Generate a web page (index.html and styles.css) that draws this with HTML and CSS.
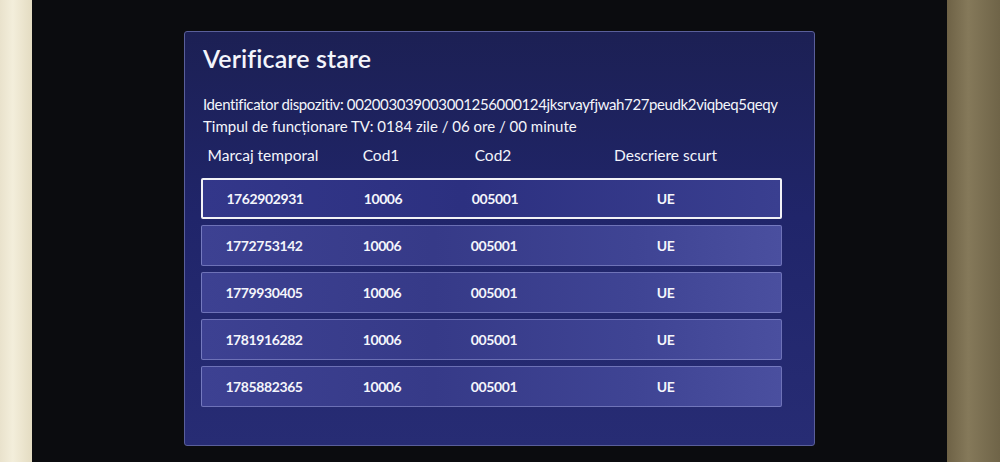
FILE: index.html
```html
<!DOCTYPE html>
<html lang="ro">
<head>
<meta charset="utf-8">
<title>Verificare stare</title>
<link rel="stylesheet" href="styles.css">
</head>
<body>
<div class="room">
  <div class="wall-left"></div>
  <div class="screen">
    <section class="panel">
      <h1 class="title">Verificare stare</h1>
      <p class="info id">Identificator dispozitiv: 002003039003001256000124jksrvayfjwah727peudk2viqbeq5qeqy</p>
      <p class="info">Timpul de funcționare TV: 0184 zile / 06 ore / 00 minute</p>
      <div class="grid head">
        <span>Marcaj temporal</span>
        <span>Cod1</span>
        <span>Cod2</span>
        <span>Descriere scurt</span>
      </div>
      <div class="rows">
        <div class="grid row selected"><span>1762902931</span><span>10006</span><span>005001</span><span>UE</span></div>
        <div class="grid row"><span>1772753142</span><span>10006</span><span>005001</span><span>UE</span></div>
        <div class="grid row"><span>1779930405</span><span>10006</span><span>005001</span><span>UE</span></div>
        <div class="grid row"><span>1781916282</span><span>10006</span><span>005001</span><span>UE</span></div>
        <div class="grid row"><span>1785882365</span><span>10006</span><span>005001</span><span>UE</span></div>
      </div>
    </section>
  </div>
  <div class="wall-right"></div>
</div>
</body>
</html>
```

FILE: styles.css
```css
* { box-sizing: border-box; }
html, body {
  margin: 0;
  padding: 0;
  width: 1000px;
  height: 462px;
  overflow: hidden;
  background: #0a0a0c;
  font-family: "Lato", "Noto Sans", sans-serif;
  color: #f4f5fb;
}
.room {
  display: flex;
  height: 462px;
}
.wall-left {
  width: 32px;
  background: linear-gradient(90deg, #e9e2cc 0%, #f3eedb 40%, #e4dcc2 100%);
}
.wall-right {
  width: 53px;
  background: linear-gradient(90deg, #6e6246 0%, #85795a 40%, #6f6448 100%);
}
.screen {
  flex: 1;
  background: #0b0c0f;
  padding: 31px 0 0 152px;
}
.panel {
  width: 631px;
  height: 415px;
  border: 1px solid #5a5f9a;
  border-radius: 3px;
  background: linear-gradient(180deg, #1c2054 0%, #20256a 45%, #272c74 100%);
  padding: 8px 32px 0 16px;
}
.title {
  margin: 0 0 0 2px;
  font-size: 25px;
  font-weight: 600;
  line-height: 36px;
  letter-spacing: 0.1px;
}
.info {
  margin: 0 0 0 2px;
  font-size: 15px;
  line-height: 22px;
  letter-spacing: 0;
}
.info.id {
  margin-top: 17px;
  letter-spacing: -0.38px;
}
.grid {
  display: grid;
  grid-template-columns: 124px 112px 112px 1fr;
  align-items: center;
}
.grid span { text-align: center; }
.head {
  margin-top: 2px;
  height: 32px;
  font-size: 15.5px;
  letter-spacing: 0;
}
.rows {
  display: flex;
  flex-direction: column;
  gap: 6px;
  margin-top: 7px;
}
.row {
  height: 41px;
  border: 1px solid rgba(170, 175, 230, 0.45);
  border-radius: 2px;
  background: linear-gradient(90deg, #3d4192 0%, #363a88 40%, #3f4494 75%, #4a4f9f 100%);
  font-size: 14px;
  font-weight: 700;
  letter-spacing: -0.4px;
}
.row.selected {
  border: 2px solid #f2f2f6;
  background: linear-gradient(90deg, #33378a 0%, #2c3080 45%, #3a3f90 100%);
}
```
